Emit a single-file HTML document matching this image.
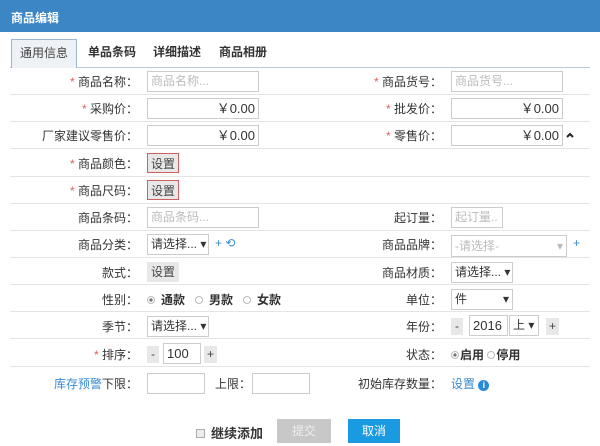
<!DOCTYPE html><html><head><meta charset="utf-8"><style>
*{margin:0;padding:0;box-sizing:border-box}
body{width:600px;height:446px;background:#fff;font-family:"Liberation Sans","Noto Sans CJK SC",sans-serif;font-size:12px;color:#333;position:relative;overflow:hidden}
.hd{position:absolute;left:0;top:0;width:600px;height:32px;background:#3d86c6;color:#fff;font-weight:bold;font-size:12px;padding:9px 0 0 11px}
.tabs{position:absolute;left:10px;top:37px;width:580px;height:31px;border-bottom:1px solid #b9c9dd}
.tab{position:absolute;top:2px;height:29px;font-weight:bold;line-height:27px;font-size:12px}
.tab.a{left:1px;width:66px;background:#eef1f5;border:1px solid #9db4d3;border-bottom:none;text-align:center;font-weight:normal;color:#444}
.ln{position:absolute;left:10px;width:580px;height:1px;background:#e4e4e4}
.l{position:absolute;text-align:right;white-space:nowrap}
.s{color:#e06060}
.in{position:absolute;height:21px;border:1px solid #ccc;background:#fff;padding:0 3px;line-height:19px;white-space:nowrap;color:#bbb}
.r{text-align:right;color:#333;font-size:13px}
.btn{position:absolute;height:20px;background:#e8e8e8;line-height:20px;text-align:center;color:#444}
.btnr{border:1px solid #d06060}
.sel{color:#333}
.blue{color:#3a8ad0}
.rad{display:inline-block;width:8px;height:8px;border:1px solid #bbb;border-radius:50%;vertical-align:-0px;margin-right:6px;background:#fff}
.rad.on{background:radial-gradient(#777 35%,#fff 45%)}
</style></head><body>
<div class="hd">商品编辑</div>
<div class="tabs">
<div class="tab a">通用信息</div>
<div class="tab" style="left:78px">单品条码</div>
<div class="tab" style="left:143px">详细描述</div>
<div class="tab" style="left:209px">商品相册</div>
</div>
<div class="ln" style="top:94px"></div><div class="ln" style="top:121px"></div><div class="ln" style="top:148px"></div><div class="ln" style="top:176px"></div><div class="ln" style="top:203px"></div><div class="ln" style="top:230px"></div><div class="ln" style="top:257px"></div><div class="ln" style="top:284px"></div><div class="ln" style="top:311px"></div><div class="ln" style="top:338px"></div><div class="ln" style="top:366px"></div>

<div class="l" style="right:462px;top:73px"><span class="s">* </span>商品名称：</div>
<div class="in" style="left:147px;top:71px;width:112px">商品名称...</div>
<div class="l" style="right:158px;top:73px"><span class="s">* </span>商品货号：</div>
<div class="in" style="left:451px;top:71px;width:112px">商品货号...</div>

<div class="l" style="right:462px;top:100px"><span class="s">* </span>采购价：</div>
<div class="in r" style="left:147px;top:98px;width:112px">￥0.00</div>
<div class="l" style="right:158px;top:100px"><span class="s">* </span>批发价：</div>
<div class="in r" style="left:451px;top:98px;width:112px">￥0.00</div>

<div class="l" style="right:462px;top:127px">厂家建议零售价：</div>
<div class="in r" style="left:147px;top:125px;width:112px">￥0.00</div>
<div class="l" style="right:158px;top:127px"><span class="s">* </span>零售价：</div>
<div class="in r" style="left:451px;top:125px;width:112px">￥0.00</div>
<svg style="position:absolute;left:566px;top:132px" width="8" height="6"><path d="M1 5L4 2L7 5" stroke="#222" stroke-width="2" fill="none"/></svg>

<div class="l" style="right:462px;top:155px"><span class="s">* </span>商品颜色：</div>
<div class="btn btnr" style="left:147px;top:153px;width:32px">设置</div>
<div class="l" style="right:462px;top:182px"><span class="s">* </span>商品尺码：</div>
<div class="btn btnr" style="left:147px;top:180px;width:32px">设置</div>

<div class="l" style="right:462px;top:209px">商品条码：</div>
<div class="in" style="left:147px;top:207px;width:112px">商品条码...</div>
<div class="l" style="right:158px;top:209px">起订量：</div>
<div class="in" style="left:451px;top:207px;width:52px">起订量..</div>

<div class="l" style="right:462px;top:236px">商品分类：</div>
<div class="in sel" style="left:147px;top:234px;width:62px">请选择... ▾</div>
<div class="l blue" style="left:215px;top:236px">+ ⟲</div>
<div class="l" style="right:158px;top:236px">商品品牌：</div>
<div class="in" style="left:451px;top:235px;width:116px;height:22px;padding-top:1px">-请选择- <span style="float:right">▾</span></div>
<div class="l blue" style="left:573px;top:236px">+</div>

<div class="l" style="right:462px;top:264px">款式：</div>
<div class="btn" style="left:147px;top:262px;width:32px">设置</div>
<div class="l" style="right:158px;top:264px">商品材质：</div>
<div class="in sel" style="left:451px;top:262px;width:62px">请选择... ▾</div>

<div class="l" style="right:462px;top:291px">性别：</div>
<div class="l" style="left:147px;top:291px;font-weight:bold"><span class="rad on"></span>通款 &nbsp; <span class="rad"></span>男款 &nbsp; <span class="rad"></span>女款</div>
<div class="l" style="right:158px;top:291px">单位：</div>
<div class="in sel" style="left:451px;top:289px;width:62px">件 <span style="float:right">▾</span></div>

<div class="l" style="right:462px;top:318px">季节：</div>
<div class="in sel" style="left:147px;top:316px;width:62px">请选择... ▾</div>
<div class="l" style="right:158px;top:318px">年份：</div>
<div class="btn" style="left:451px;top:318px;width:12px;height:17px;line-height:17px">-</div>
<div class="in sel" style="left:469px;top:315px;width:39px;font-size:13px">2016</div>
<div class="in sel" style="left:509px;top:315px;width:30px">上 ▾</div>
<div class="btn" style="left:546px;top:318px;width:13px;height:17px;line-height:17px">+</div>

<div class="l" style="right:462px;top:346px"><span class="s">* </span>排序：</div>
<div class="btn" style="left:147px;top:346px;width:12px;height:17px;line-height:17px">-</div>
<div class="in sel" style="left:163px;top:343px;width:38px;font-size:13px">100</div>
<div class="btn" style="left:204px;top:346px;width:13px;height:17px;line-height:17px">+</div>
<div class="l" style="right:158px;top:346px">状态：</div>
<div class="l" style="left:451px;top:346px;font-weight:bold"><span class="rad on" style="margin-right:1px"></span>启用 <span class="rad" style="margin-right:1px"></span>停用</div>

<div class="l" style="right:462px;top:375px"><span class="blue">库存预警</span>下限：</div>
<div class="in" style="left:147px;top:373px;width:58px"></div>
<div class="l" style="left:215px;top:375px">上限：</div>
<div class="in" style="left:252px;top:373px;width:58px"></div>
<div class="l" style="right:158px;top:375px">初始库存数量：</div>
<div class="l blue" style="left:451px;top:375px">设置 <span style="display:inline-block;width:11px;height:11px;border-radius:50%;background:#2a8ad8;color:#fff;font-size:9px;line-height:11px;text-align:center;font-weight:bold">i</span></div>

<div class="l" style="left:196px;top:423px;font-weight:bold;font-size:13px"><span style="display:inline-block;width:9px;height:9px;border:1px solid #aaa;background:#eee;margin-right:6px"></span>继续添加</div>
<div class="btn" style="left:277px;top:419px;width:54px;height:24px;line-height:24px;background:#c8c8c8;color:#eee">提交</div>
<div class="btn" style="left:348px;top:419px;width:52px;height:24px;line-height:24px;background:#1a9ae0;color:#fff">取消</div>
</body></html>
